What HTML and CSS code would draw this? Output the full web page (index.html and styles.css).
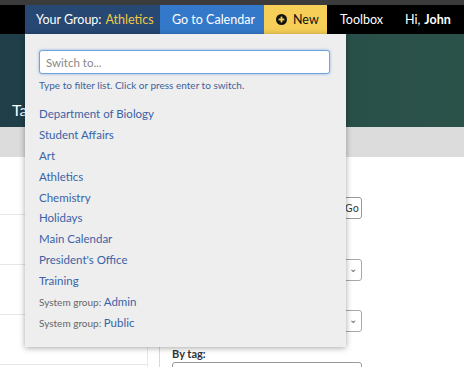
FILE: index.html
```html
<!DOCTYPE html>
<html>
<head>
<meta charset="utf-8">
<link rel="stylesheet" href="styles.css">
</head>
<body>
<div class="topstrip"></div>
<nav class="nav">
  <div class="nav-spacer"></div>
  <div class="nav-group">
    <span class="nav-item group-item">Your Group: <span class="hl">Athletics</span></span>
    <div class="dropdown">
      <input class="switch-input" type="text" placeholder="Switch to...">
      <p class="help">Type to filter list. Click or press enter to switch.</p>
      <ul class="group-list">
        <li><a>Department of Biology</a></li>
        <li><a>Student Affairs</a></li>
        <li><a>Art</a></li>
        <li><a>Athletics</a></li>
        <li><a>Chemistry</a></li>
        <li><a>Holidays</a></li>
        <li><a>Main Calendar</a></li>
        <li><a>President's Office</a></li>
        <li><a>Training</a></li>
        <li><span class="sys">System group: </span><a>Admin</a></li>
        <li><span class="sys">System group: </span><a>Public</a></li>
      </ul>
    </div>
  </div>
  <span class="nav-item cal-item">Go to Calendar</span>
  <span class="nav-item new-item"><svg class="plus" width="11" height="11" viewBox="0 0 11 11"><circle cx="5.5" cy="5.5" r="5.5" fill="#111"/><rect x="2.6" y="4.6" width="5.8" height="1.8" fill="#f5cf57"/><rect x="4.6" y="2.6" width="1.8" height="5.8" fill="#f5cf57"/></svg>New</span>
  <span class="nav-item tool-item">Toolbox</span>
  <span class="nav-item hi-item">Hi, <b>John</b></span>
</nav>
<header class="hero"><span class="hero-title">Ta</span></header>
<div class="subbar"></div>
<main class="content">
  <section class="left-col">
    <div class="row first"></div>
    <div class="row"></div>
    <div class="row"></div>
    <div class="row"></div>
  </section>
  <section class="right-col">
    <div class="search-row">
      <span class="go-btn">Go</span>
    </div>
    <div class="select-box"><span class="chev">&#8964;</span></div>
    <div class="select-box second"><span class="chev">&#8964;</span></div>
    <div class="label">By tag:</div>
    <div class="tag-input"></div>
  </section>
</main>
</body>
</html>
```

FILE: styles.css
```css
* { box-sizing: border-box; }
html, body { margin: 0; padding: 0; }
body {
  width: 464px;
  height: 367px;
  overflow: hidden;
  background: #fff;
  font-family: Lato, "Open Sans", Arial, sans-serif;
}
.topstrip { height: 5px; background: #3b3b3b; }
.nav {
  display: flex;
  height: 29px;
  background: #000;
  align-items: stretch;
}
.nav-spacer { width: 25px; }
.nav-group { position: relative; display: flex; }
.nav-item {
  display: flex;
  align-items: center;
  font-size: 12.5px;
  color: #fff;
  white-space: nowrap;
}
.group-item { background: #264872; width: 135px; padding-left: 11px; }
.hl { color: #f5c842; margin-left: 4px; }
.cal-item { background: #3479c9; width: 104px; padding-left: 12px; }
.new-item { background: #f5cf57; color: #111; width: 63px; padding-left: 12px; }
.plus { margin-right: 6px; }
.tool-item { padding-left: 13px; width: 78px; }
.hi-item b { margin-left: 4px; font-weight: 700; }
.dropdown {
  position: absolute;
  top: 29px;
  left: 0;
  width: 321px;
  height: 313px;
  background: #eeeeee;
  box-shadow: 0 1px 6px rgba(0,0,0,0.35);
  padding: 16px 16px 0 14px;
  z-index: 10;
}
.switch-input {
  display: block;
  width: 291px;
  height: 24px;
  border: 1px solid #6fa3e2;
  border-radius: 3px;
  box-shadow: 0 0 3px rgba(80,140,220,0.6);
  padding: 0 6px;
  font-family: Lato, Arial, sans-serif;
  font-size: 11.5px;
  color: #333;
  background: #fff;
  outline: none;
}
.switch-input::placeholder { color: #888; }
.help {
  margin: 5px 0 0;
  font-size: 10px;
  color: #3f629a;
}
.group-list {
  list-style: none;
  margin: 13px 0 0;
  padding: 0;
}
.group-list li {
  height: 20.9px;
  line-height: 20.9px;
  font-size: 11.5px;
  color: #3a62a6;
}
.group-list a { color: #3a62a6; }
.sys { color: #666; font-size: 10px; }
.hero {
  height: 93px;
  background: linear-gradient(90deg, #1f3e48 0%, #264a4a 40%, #2b5249 100%);
}
.hero-title {
  display: block;
  padding: 66px 0 0 12px;
  color: #fff;
  font-size: 16px;
}
.subbar { height: 30px; background: #dcdcdc; }
.content { display: flex; }
.left-col { width: 148px; border-right: 1px solid #e8e8e8; }
.row { height: 50px; border-bottom: 1px solid #e6e6e6; }
.row.first { height: 58px; }
.right-col {
  margin-left: 11px;
  margin-top: 10px;
  border-left: 1px solid #d9d9d9;
  width: 203px;
  padding: 30px 0 0 12px;
}
.search-row { display: flex; justify-content: flex-end; height: 22px; }
.go-btn {
  width: 30px;
  height: 22px;
  border: 1px solid #999;
  border-radius: 3px;
  font-size: 10px;
  display: flex;
  align-items: center;
  padding-left: 12px;
  color: #333;
  font-family: "DejaVu Sans", sans-serif;
}
.select-box {
  margin-top: 40px;
  height: 22px;
  border: 1px solid #a8a8a8;
  border-radius: 3px;
  position: relative;
}
.select-box.second { margin-top: 29px; }
.chev {
  position: absolute;
  right: 4px;
  top: 1px;
  font-size: 10px;
  line-height: 14px;
  color: #666;
}
.label {
  margin-top: 15px;
  font-size: 11px;
  font-weight: 700;
  color: #333;
}
.tag-input {
  margin-top: 2px;
  height: 22px;
  border: 1px solid #999;
  border-radius: 3px;
}
```
